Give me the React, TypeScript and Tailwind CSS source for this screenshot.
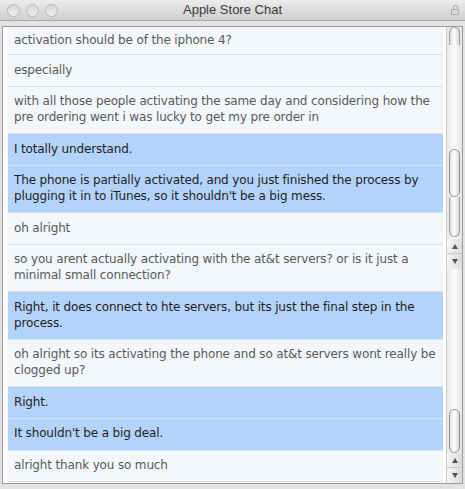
import React from 'react';

type Msg = { text: string; rep?: boolean };

const messages: Msg[] = [
  { text: 'activation should be of the iphone 4?' },
  { text: 'especially' },
  { text: 'with all those people activating the same day and considering how the pre ordering went i was lucky to get my pre order in' },
  { text: 'I totally understand.', rep: true },
  { text: "The phone is partially activated, and you just finished the process by plugging it in to iTunes, so it shouldn't be a big mess.", rep: true },
  { text: 'oh alright' },
  { text: 'so you arent actually activating with the at&t servers? or is it just a minimal small connection?' },
  { text: 'Right, it does connect to hte servers, but its just the final step in the process.', rep: true },
  { text: 'oh alright so its activating the phone and so at&t servers wont really be clogged up?' },
  { text: 'Right.', rep: true },
  { text: "It shouldn't be a big deal.", rep: true },
  { text: 'alright thank you so much' },
];

const Light = () => (
  <div className="w-[13px] h-[13px] rounded-full border border-[#b8b8b8] bg-gradient-to-b from-[#d6d6d6] to-[#eeeeee]" />
);

const Arrows = () => (
  <div className="flex flex-col items-center bg-gradient-to-r from-[#f4f4f4] to-[#dcdcdc]">
    <div className="h-[15px] flex items-center justify-center border-b border-[#c9c9c9] w-full">
      <div className="w-0 h-0 border-l-[3px] border-r-[3px] border-b-[5px] border-l-transparent border-r-transparent border-b-[#555]" />
    </div>
    <div className="h-[15px] flex items-center justify-center w-full">
      <div className="w-0 h-0 border-l-[3px] border-r-[3px] border-t-[5px] border-l-transparent border-r-transparent border-t-[#555]" />
    </div>
  </div>
);

const Thumb = ({ h }: { h: string }) => (
  <div className={`${h} mx-[2px] rounded-full border border-[#8f8f8f] bg-gradient-to-r from-[#e6e6e6] via-[#ffffff] to-[#d8d8d8]`} />
);

export default function App() {
  return (
    <div className="w-[465px] h-[489px] bg-[#e3e3e3] flex flex-col" style={{ fontFamily: '"DejaVu Sans", Verdana, sans-serif' }}>
      {/* title bar */}
      <div className="h-[21px] shrink-0 relative flex items-center bg-gradient-to-b from-[#ececec] to-[#cfcfcf] border-b border-[#a8a8a8]">
        <div className="flex gap-[6px] pl-[7px]">
          <Light />
          <Light />
          <Light />
        </div>
        <div className="absolute inset-0 flex items-center justify-center text-[13px] text-[#3a3a3a]" style={{ fontFamily: '"Liberation Sans", Arial, sans-serif' }}>
          Apple Store Chat
        </div>
        <div className="ml-auto mr-[6px] flex flex-col items-center opacity-60">
          <div className="w-[5px] h-[4px] border border-b-0 border-[#888] rounded-t-[3px]" />
          <div className="w-[8px] h-[6px] border border-[#888] rounded-[1px]" />
        </div>
      </div>

      {/* chat panel */}
      <div className="mx-[2px] mt-[5px] mb-[5px] flex-1 min-h-0 border border-[#9c9c9c] bg-white flex">
        <div className="flex-1 pl-[5px] pr-[3px] overflow-hidden">
          {messages.map((m, i) => (
            <div
              key={i}
              className={`${i === 0 ? 'pt-[5px] pb-[6px] leading-[16px]' : 'py-[7.5px] leading-[15.7px]'} pl-[6px] pr-[2px] text-[12px] tracking-[-0.15px] border-b ${
                m.rep ? 'bg-[#b4d3fb] text-[#1e1e1e] border-[#d4e4fb]' : 'bg-[#f3f6fb] text-[#5a5a5a] border-[#d9dfe7]'
              }`}
            >
              {m.text}
            </div>
          ))}
        </div>

        {/* scrollbar */}
        <div className="w-[16px] shrink-0 border-l border-[#cfcfcf] bg-gradient-to-r from-[#e8e8e8] via-[#fafafa] to-[#e4e4e4] flex flex-col">
          <div className="h-[18px] mx-[2px] rounded-t-full border border-b-0 border-[#a0a0a0] bg-gradient-to-r from-[#dedede] via-white to-[#d6d6d6]" />
          <div className="h-[104px]" />
          <Thumb h="h-[48px]" />
          <div className="h-[40px] mx-[2px] rounded-b-full border border-t-0 border-[#a0a0a0] bg-gradient-to-r from-[#dedede] via-white to-[#d6d6d6]" />
          <div className="h-[2px]" />
          <Arrows />
          <div className="flex-1" />
          <Thumb h="h-[44px]" />
          <Arrows />
        </div>
      </div>
    </div>
  );
}
